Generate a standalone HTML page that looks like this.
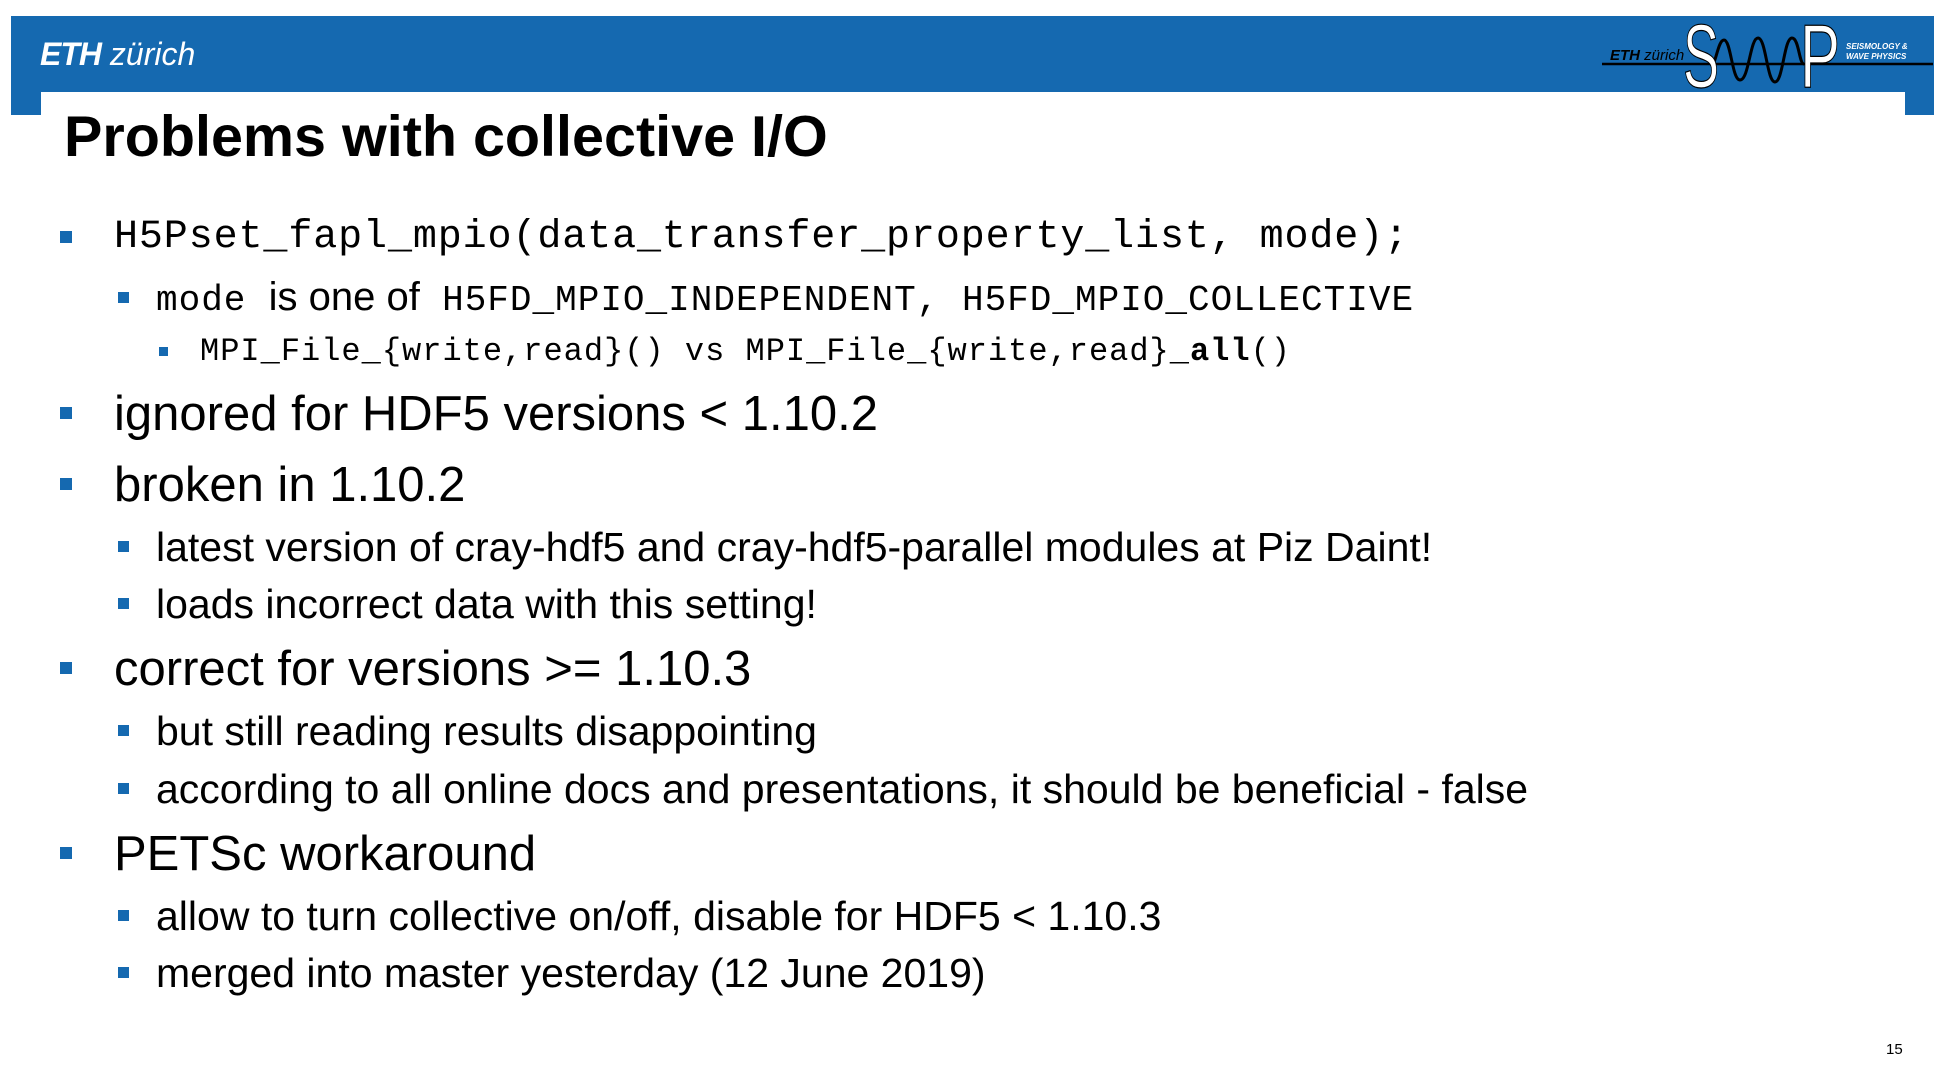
<!DOCTYPE html>
<html><head><meta charset="utf-8"><style>
body{margin:0;width:1946px;height:1091px;background:#fff;position:relative;overflow:hidden;font-family:"Liberation Sans",Arial,sans-serif;color:#000}
.a{position:absolute;white-space:nowrap}
.l{position:absolute;white-space:nowrap;height:60px;line-height:60px}
.m{font-family:"Liberation Mono",monospace}
.b{position:absolute;background:#1569b0}
</style></head><body>
<div class="b" style="left:11px;top:16px;width:1923px;height:76px"></div>
<div class="b" style="left:11px;top:90px;width:30px;height:25px"></div>
<div class="b" style="left:1905px;top:90px;width:29px;height:25px"></div>
<div class="a" style="left:40px;top:36px;font-size:32px;color:#fff;line-height:36px"><b style="font-style:italic;letter-spacing:-1px">ETH</b><span style="font-style:italic;font-weight:300"> zürich</span></div>
<svg class="a" style="left:1595px;top:16px" width="340" height="78" viewBox="1595 16 340 78">
<line x1="1602" y1="64" x2="1933" y2="64" stroke="#000" stroke-width="2.5"/>
<path d="M1712 64 C1716 64 1718 40 1724 40 C1731 40 1732 80 1740 80 C1749 80 1750 38 1758 38 C1766 38 1767 82 1775 82 C1783 82 1784 38 1792 38 C1799 38 1799 64 1804 64" fill="none" stroke="#000" stroke-width="3"/>
<text x="1683" y="87" font-family="Liberation Sans" font-size="90" fill="#fff" stroke="#000" stroke-width="1.2" textLength="36" lengthAdjust="spacingAndGlyphs">S</text>
<text x="1800" y="87" font-family="Liberation Sans" font-size="90" fill="#fff" stroke="#000" stroke-width="1.2" textLength="40" lengthAdjust="spacingAndGlyphs">P</text>
<text x="1610" y="60" font-family="Liberation Sans" font-size="15" font-style="italic" fill="#000"><tspan font-weight="bold">ETH</tspan> zürich</text>
<text x="1846" y="49" font-family="Liberation Sans" font-size="8" font-weight="bold" font-style="italic" fill="#fff">SEISMOLOGY &amp;</text>
<text x="1846" y="59" font-family="Liberation Sans" font-size="8" font-weight="bold" font-style="italic" fill="#fff">WAVE PHYSICS</text>
</svg>
<div class="a" style="left:64px;top:103px;font-size:57.5px;font-weight:bold;line-height:68px">Problems with collective I/O</div>

<div class="b" style="left:60px;top:231px;width:12px;height:12px"></div>
<div class="l m" style="left:114px;top:208px;font-size:40px;letter-spacing:0.9px">H5Pset_fapl_mpio(data_transfer_property_list, mode);</div>

<div class="b" style="left:118px;top:292px;width:11px;height:11px"></div>
<div class="l" style="left:156px;top:267px;font-size:40px"><span class="m" style="font-size:36px;letter-spacing:1px">mode</span>&nbsp; is one of&nbsp; <span class="m" style="font-size:36px;letter-spacing:1px">H5FD_MPIO_INDEPENDENT, H5FD_MPIO_COLLECTIVE</span></div>

<div class="b" style="left:159px;top:347px;width:9px;height:9px"></div>
<div class="l m" style="left:200px;top:322px;font-size:32px;letter-spacing:1px">MPI_File_{write,read}() vs MPI_File_{write,read}<b>_all</b>()</div>

<div class="b" style="left:60px;top:407px;width:12px;height:12px"></div>
<div class="l" style="left:114px;top:384px;font-size:49px">ignored for HDF5 versions &lt; 1.10.2</div>
<div class="b" style="left:60px;top:478px;width:12px;height:12px"></div>
<div class="l" style="left:114px;top:455px;font-size:49px">broken in 1.10.2</div>
<div class="b" style="left:118px;top:541px;width:11px;height:11px"></div>
<div class="l" style="left:156px;top:517px;font-size:41px">latest version of cray-hdf5 and cray-hdf5-parallel modules at Piz Daint!</div>
<div class="b" style="left:118px;top:598px;width:11px;height:11px"></div>
<div class="l" style="left:156px;top:574px;font-size:41px">loads incorrect data with this setting!</div>
<div class="b" style="left:60px;top:662px;width:12px;height:12px"></div>
<div class="l" style="left:114px;top:639px;font-size:49px">correct for versions &gt;= 1.10.3</div>
<div class="b" style="left:118px;top:725px;width:11px;height:11px"></div>
<div class="l" style="left:156px;top:701px;font-size:41px">but still reading results disappointing</div>
<div class="b" style="left:118px;top:783px;width:11px;height:11px"></div>
<div class="l" style="left:156px;top:759px;font-size:41px">according to all online docs and presentations, it should be beneficial - false</div>
<div class="b" style="left:60px;top:847px;width:12px;height:12px"></div>
<div class="l" style="left:114px;top:824px;font-size:49px">PETSc workaround</div>
<div class="b" style="left:118px;top:910px;width:11px;height:11px"></div>
<div class="l" style="left:156px;top:886px;font-size:41px">allow to turn collective on/off, disable for HDF5 &lt; 1.10.3</div>
<div class="b" style="left:118px;top:967px;width:11px;height:11px"></div>
<div class="l" style="left:156px;top:943px;font-size:41px">merged into master yesterday (12 June 2019)</div>
<div class="a" style="left:1886px;top:1041px;font-size:15px">15</div>
</body></html>
